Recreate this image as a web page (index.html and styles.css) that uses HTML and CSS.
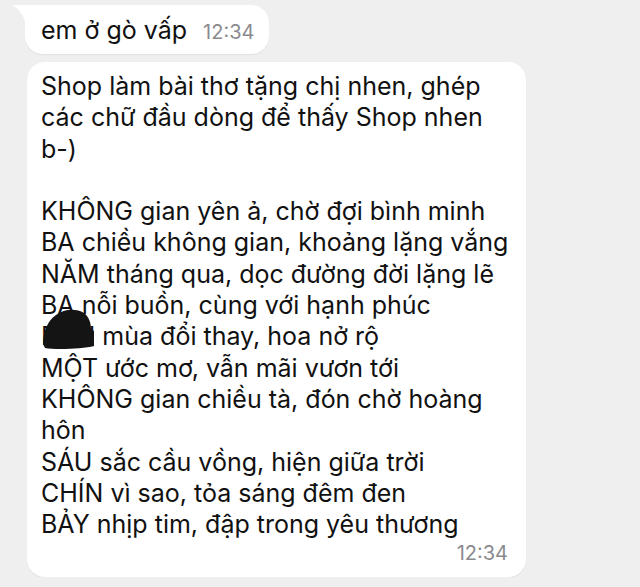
FILE: index.html
```html
<!DOCTYPE html>
<html lang="vi">

<head>
    <meta charset="UTF-8">
    <meta name="viewport" content="width=device-width, initial-scale=1.0">
    <title>Tin nhắn</title>
    <link rel="stylesheet" href="styles.css">
</head>

<body>
    <div id="chat">
        <div class="bubble first">
            <svg class="tail" width="14" height="20" viewBox="0 0 14 20">
                <path d="M0 0 H14 V20 C12 10 6 3 0 0 Z" fill="#fff" />
            </svg>
            <span class="text">em ở gò vấp</span>
            <span class="time">12:34</span>
        </div>
        <div class="bubble poem">
            <p>Shop làm bài thơ tặng chị nhen, ghép các chữ đầu dòng để thấy Shop nhen b-)</p>
            <p>
                KHÔNG gian yên ả, chờ đợi bình minh<br>
                BA chiều không gian, khoảng lặng vắng<br>
                NĂM tháng qua, dọc đường đời lặng lẽ<br>
                BA nỗi buồn, cùng với hạnh phúc<br>
                <span class="hidden">BỐN</span> mùa đổi thay, hoa nở rộ<br>
                MỘT ước mơ, vẫn mãi vươn tới<br>
                KHÔNG gian chiều tà, đón chờ hoàng hôn<br>
                SÁU sắc cầu vồng, hiện giữa trời<br>
                CHÍN vì sao, tỏa sáng đêm đen<br>
                BẢY nhịp tim, đập trong yêu thương
            </p>
            <div class="time">12:34</div>
            <!-- censor mark -->
            <svg class="scribble" width="52" height="42" viewBox="0 0 52 42">
                <path d="M0 36 C0 25 4 13 13 7 C21 1 33 0 41 5 C46 9 48 15 48 21 L51 23 L51 38 C40 41 12 42 2 40 Z" fill="#141414" />
            </svg>
        </div>
    </div>
</body>

</html>
```

FILE: styles.css
```css
* {
    margin: 0;
    padding: 0;
    box-sizing: border-box;
}

body {
    background-color: #efefef;
    font-family: Inter, 'Liberation Sans', Arial, sans-serif;
    color: #111;
}

#chat {
    display: flex;
    flex-direction: column;
    align-items: flex-start;
    gap: 8px;
    padding: 5px 0 0 25px;
}

.bubble {
    background-color: #fff;
    border-radius: 18px;
    position: relative;
    box-shadow: 0 1px 1px rgba(0, 0, 0, 0.06);
}

.first {
    width: 244px;
    height: 49px;
    border-top-left-radius: 0;
    display: flex;
    align-items: baseline;
    padding: 10px 0 0 16px;
}

.tail {
    position: absolute;
    left: -13px;
    top: 0;
}

.first .text {
    font-size: 25px;
}

.first .time {
    font-size: 20px;
    color: #8a8a8e;
    margin-left: 16px;
}

.poem {
    width: 499px;
    margin-left: 2px;
    padding: 9px 14px 11px 14px;
    font-size: 25px;
    line-height: 31.3px;
}

.poem p+p {
    margin-top: 31.3px;
}

.poem .time {
    text-align: right;
    font-size: 20px;
    line-height: 26px;
    color: #8a8a8e;
    margin-right: 4px;
}

.scribble {
    position: absolute;
    left: 16px;
    top: 246px;
}
```
